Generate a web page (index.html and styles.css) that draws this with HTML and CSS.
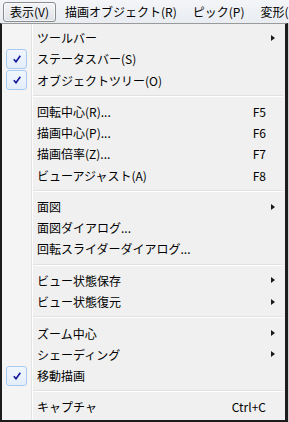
FILE: index.html
```html
<!DOCTYPE html>
<html lang="ja">
<head>
<meta charset="utf-8">
<link rel="stylesheet" href="styles.css">
</head>
<body>
<div class="menubar">
  <span class="mb-item active">表示(V)</span>
  <span class="mb-item">描画オブジェクト(R)</span>
  <span class="mb-item">ピック(P)</span>
  <span class="mb-item">変形(</span>
</div>
<div class="menu">
  <div class="item"><span class="label">ツールバー</span><span class="sc"></span><span class="arrow"></span></div>
  <div class="item"><span class="check"><svg viewBox="0 0 8 8" width="8" height="8"><path d="M0.8 4.2 L3 6.8 L7.3 0.8" fill="none" stroke="#14169c" stroke-width="1.6"/></svg></span><span class="label">ステータスバー(S)</span></div>
  <div class="item"><span class="check"><svg viewBox="0 0 8 8" width="8" height="8"><path d="M0.8 4.2 L3 6.8 L7.3 0.8" fill="none" stroke="#14169c" stroke-width="1.6"/></svg></span><span class="label">オブジェクトツリー(O)</span></div>
  <div class="sep"></div>
  <div class="item"><span class="label">回転中心(R)...</span><span class="sc">F5</span></div>
  <div class="item"><span class="label">描画中心(P)...</span><span class="sc">F6</span></div>
  <div class="item"><span class="label">描画倍率(Z)...</span><span class="sc">F7</span></div>
  <div class="item"><span class="label">ビューアジャスト(A)</span><span class="sc">F8</span></div>
  <div class="sep"></div>
  <div class="item"><span class="label">面図</span><span class="sc"></span><span class="arrow"></span></div>
  <div class="item"><span class="label">面図ダイアログ...</span></div>
  <div class="item"><span class="label">回転スライダーダイアログ...</span></div>
  <div class="sep"></div>
  <div class="item"><span class="label">ビュー状態保存</span><span class="sc"></span><span class="arrow"></span></div>
  <div class="item"><span class="label">ビュー状態復元</span><span class="sc"></span><span class="arrow"></span></div>
  <div class="sep"></div>
  <div class="item"><span class="label">ズーム中心</span><span class="sc"></span><span class="arrow"></span></div>
  <div class="item"><span class="label">シェーディング</span><span class="sc"></span><span class="arrow"></span></div>
  <div class="item"><span class="check"><svg viewBox="0 0 8 8" width="8" height="8"><path d="M0.8 4.2 L3 6.8 L7.3 0.8" fill="none" stroke="#14169c" stroke-width="1.6"/></svg></span><span class="label">移動描画</span></div>
  <div class="sep"></div>
  <div class="item"><span class="label">キャプチャ</span><span class="sc">Ctrl+C</span></div>
</div>
</body>
</html>
```
FILE: styles.css
```css
html, body {
  margin: 0;
  padding: 0;
}
body {
  width: 289px;
  height: 422px;
  overflow: hidden;
  background: #cfcfcf;
  font-family: "Noto Sans CJK JP", "Noto Sans", sans-serif;
  font-size: 12px;
  color: #000;
}
.menubar {
  height: 23px;
  box-sizing: border-box;
  display: flex;
  align-items: center;
  padding: 2px 0 1px 3px;
  background: linear-gradient(#f3f5f8, #e9ecf1);
  white-space: nowrap;
  overflow: hidden;
}
.mb-item {
  box-sizing: border-box;
  height: 20px;
  line-height: 18px;
  padding: 0 6px 0 6px;
  margin-right: 2px;
  border: 1px solid transparent;
}
.mb-item.active {
  border-color: #8a8c8f;
  border-radius: 3px;
  background: linear-gradient(#f4f5f7, #dfe2e7);
  box-shadow: inset 0 0 0 1px rgba(255,255,255,0.6);
}
.menu {
  width: 288px;
  box-sizing: border-box;
  height: 399px;
  border-left: 2px solid #1c1c1c;
  border-right: 3px solid #1c1c1c;
  border-top: 1px solid #9a9a9a;
  border-bottom: 2px solid #1c1c1c;
  padding: 3.1px 0 2px 0;
  background:
    linear-gradient(to right, #f4f4f4 0 29px, #e2e3e3 29px 30px, #ffffff 30px 31px, #f0f0f0 31px);
}
.item {
  height: 21.2px;
  display: grid;
  grid-template-columns: 4px 21px 10px 1fr auto 19px;
  align-items: center;
  white-space: nowrap;
}
.check {
  grid-column: 2;
  grid-row: 1;
  box-sizing: border-box;
  height: 20px;
  border: 1px solid #a8c9f0;
  border-radius: 3px;
  background: linear-gradient(#f1f6fd, #e3edfa);
  display: flex;
  align-items: center;
  justify-content: center;
}
.check svg {
  display: block;
}
.label {
  grid-column: 4;
  grid-row: 1;
  line-height: 21px;
}
.sc {
  grid-column: 5;
  grid-row: 1;
  text-align: right;
}
.arrow {
  grid-column: 6;
  grid-row: 1;
  justify-self: start;
  margin-left: 5px;
  width: 0;
  height: 0;
  border-top: 3.5px solid transparent;
  border-bottom: 3.5px solid transparent;
  border-left: 4px solid #1a1a1a;
}
.sep {
  height: 10.3px;
  margin: 0 2px 0 31px;
  background: linear-gradient(#f0f0f0 0 4px, #e0e0e0 4px 5px, #ffffff 5px 6px, #f0f0f0 6px);
}
```
